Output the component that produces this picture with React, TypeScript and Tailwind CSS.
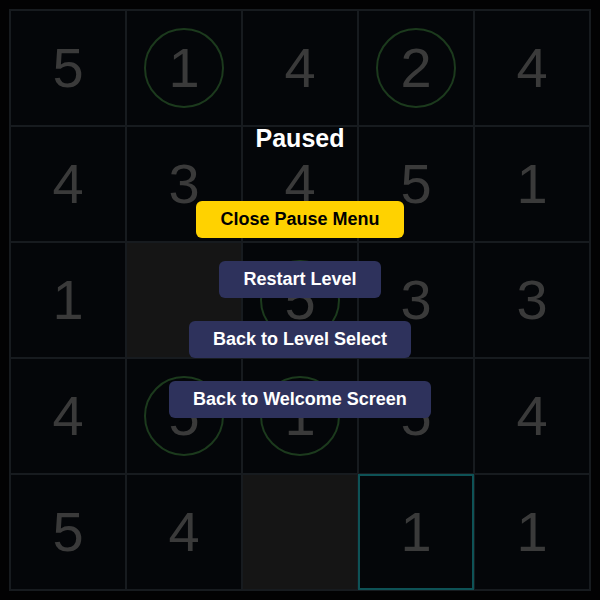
import React from "react";

type Cell = { v: number | null; circle?: boolean; dark?: boolean; sel?: boolean };

const rows: Cell[][] = [
  [{ v: 5 }, { v: 1, circle: true }, { v: 4 }, { v: 2, circle: true }, { v: 4 }],
  [{ v: 4 }, { v: 3 }, { v: 4 }, { v: 5 }, { v: 1 }],
  [{ v: 1 }, { v: null, dark: true }, { v: 5, circle: true }, { v: 3 }, { v: 3 }],
  [{ v: 4 }, { v: 5, circle: true }, { v: 1, circle: true }, { v: 5 }, { v: 4 }],
  [{ v: 5 }, { v: 4 }, { v: null, dark: true }, { v: 1, sel: true }, { v: 1 }],
];

export default function App() {
  return (
    <div
      className="relative w-[600px] h-[600px] bg-[#020203] overflow-hidden"
      style={{ fontFamily: '"Liberation Sans", Arial, sans-serif' }}
    >
      <div className="absolute left-[9px] top-[9px] border border-[#171b1f] grid grid-cols-5">
        {rows.flat().map((c, i) => (
          <div
            key={i}
            className={`w-[116px] h-[116px] flex items-center justify-center ${
              c.sel ? "border-2 border-[#0e5256]" : "border border-[#171b1f]"
            } ${c.dark ? "bg-[#151515]" : "bg-[#040609]"}`}
          >
            {c.circle ? (
              <div className="w-[80px] h-[80px] rounded-full border-2 border-[#1c3a1d] flex items-center justify-center">
                <span className="text-[56px] leading-none text-[#3a3a3a]">{c.v}</span>
              </div>
            ) : (
              c.v !== null && <span className="text-[56px] leading-none text-[#3a3a3a]">{c.v}</span>
            )}
          </div>
        ))}
      </div>
      <div className="absolute inset-0 flex flex-col items-center pt-[123px]">
        <div className="text-[25px] leading-[30px] font-bold text-white">Paused</div>
        <div className="mt-[48px] flex flex-col items-center gap-[23px]">
          <button className="px-6 h-[37px] rounded-md bg-[#ffd200] text-black text-[18px] font-bold leading-[21px]">
            Close Pause Menu
          </button>
          <button className="px-6 h-[37px] rounded-md bg-[#2e325c] text-white text-[18px] font-bold leading-[21px]">
            Restart Level
          </button>
          <button className="px-6 h-[37px] rounded-md bg-[#2e325c] text-white text-[18px] font-bold leading-[21px]">
            Back to Level Select
          </button>
          <button className="px-6 h-[37px] rounded-md bg-[#2e325c] text-white text-[18px] font-bold leading-[21px]">
            Back to Welcome Screen
          </button>
        </div>
      </div>
    </div>
  );
}
